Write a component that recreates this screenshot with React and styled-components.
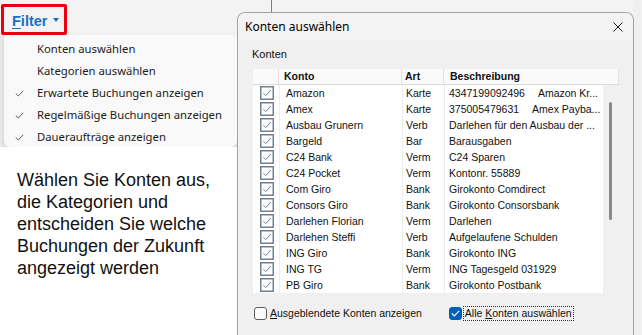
import React from "react";
import styled, { createGlobalStyle } from "styled-components";

const accounts = [
  ["Amazon", "Karte", "4347199092496", "Amazon Kr..."],
  ["Amex", "Karte", "375005479631", "Amex Payba..."],
  ["Ausbau Grunern", "Verb", "Darlehen für den Ausbau der ..."],
  ["Bargeld", "Bar", "Barausgaben"],
  ["C24 Bank", "Verm", "C24 Sparen"],
  ["C24 Pocket", "Verm", "Kontonr. 55889"],
  ["Com Giro", "Bank", "Girokonto Comdirect"],
  ["Consors Giro", "Bank", "Girokonto Consorsbank"],
  ["Darlehen Florian", "Verm", "Darlehen"],
  ["Darlehen Steffi", "Verb", "Aufgelaufene Schulden"],
  ["ING Giro", "Bank", "Girokonto ING"],
  ["ING TG", "Verm", "ING Tagesgeld 031929"],
  ["PB Giro", "Bank", "Girokonto Postbank"],
];

const menuItems = [
  { label: "Konten auswählen", checked: false },
  { label: "Kategorien auswählen", checked: false },
  { label: "Erwartete Buchungen anzeigen", checked: true },
  { label: "Regelmäßige Buchungen anzeigen", checked: true },
  { label: "Daueraufträge anzeigen", checked: true },
];

const MenuCheck = () => (
  <svg width="9" height="7" viewBox="0 0 9 7">
    <path d="M0.8 3.6 L3.3 6 L8.2 0.8" fill="none" stroke="#5c5c5c" strokeWidth="1" />
  </svg>
);

const RowCheck = () => (
  <svg width="14" height="14" viewBox="0 0 14 14">
    <rect x="0.75" y="0.75" width="12.5" height="12.5" fill="#fff" stroke="#6f7f96" strokeWidth="1.5" />
    <path d="M3.2 7 L5.8 9.6 L10.8 4" fill="none" stroke="#7b8696" strokeWidth="1" />
  </svg>
);

const CloseIcon = () => (
  <svg width="10" height="10" viewBox="0 0 10 10">
    <path d="M0.5 0.5 L9.5 9.5 M9.5 0.5 L0.5 9.5" stroke="#1a1a1a" strokeWidth="1" />
  </svg>
);

export default function App() {
  return (
    <>
      <GlobalStyle />
      <Screen>
        <LeftPane>
          <TopBar>
            <FilterButton>
              <FilterLabel>
                <u>F</u>ilter
              </FilterLabel>
              <Caret />
            </FilterButton>
          </TopBar>
          <MenuRow>
            <Menu>
              {menuItems.map((item) => (
                <MenuItem key={item.label}>
                  <CheckSlot>{item.checked && <MenuCheck />}</CheckSlot>
                  {item.label}
                </MenuItem>
              ))}
            </Menu>
          </MenuRow>
          <Hint>
            Wählen Sie Konten aus,
            <br />
            die Kategorien und
            <br />
            entscheiden Sie welche
            <br />
            Buchungen der Zukunft
            <br />
            angezeigt werden
          </Hint>
        </LeftPane>

        <DialogArea>
          <Dialog>
            <TitleBar>
              <Title>Konten auswählen</Title>
              <CloseIcon />
            </TitleBar>
            <DialogBody>
              <GroupLabel>Konten</GroupLabel>
              <Table>
                <HeaderRow>
                  <HeadCell width="26px" />
                  <HeadCell width="123px" pad="5px">Konto</HeadCell>
                  <HeadCell width="42px" pad="3px">Art</HeadCell>
                  <HeadCell grow pad="6px">Beschreibung</HeadCell>
                </HeaderRow>
                <TableBody>
                  <List>
                    {accounts.map(([name, kind, desc, note]) => (
                      <Row key={name}>
                        <CheckCell>
                          <RowCheck />
                        </CheckCell>
                        <Cell width="123px" pad="6px">{name}</Cell>
                        <Cell width="42px" pad="3px">{kind}</Cell>
                        <Cell grow pad="4px">
                          {desc}
                          {note && <Note>{note}</Note>}
                        </Cell>
                      </Row>
                    ))}
                  </List>
                  <ScrollLane>
                    <Thumb />
                  </ScrollLane>
                </TableBody>
              </Table>
              <Options>
                <Option>
                  <Box />
                  <OptionText>
                    <u>A</u>usgeblendete Konten anzeigen
                  </OptionText>
                </Option>
                <Option>
                  <Box checked>
                    <svg width="9" height="7" viewBox="0 0 9 7">
                      <path d="M0.8 3.4 L3.3 5.9 L8.2 0.8" fill="none" stroke="#fff" strokeWidth="1.2" />
                    </svg>
                  </Box>
                  <OptionText focused>
                    Alle <u>K</u>onten auswählen
                  </OptionText>
                </Option>
              </Options>
            </DialogBody>
          </Dialog>
        </DialogArea>
        <RightStrip />
      </Screen>
    </>
  );
}

const GlobalStyle = createGlobalStyle`
  html, body {
    margin: 0;
    padding: 0;
  }
  body {
    width: 642px;
    height: 335px;
    overflow: hidden;
    background: #f0f0f0;
    font-family: "Liberation Sans", Arial, sans-serif;
  }
`;

const Screen = styled.div`
  display: flex;
  width: 642px;
  height: 335px;
  overflow: hidden;
`;

const LeftPane = styled.div`
  width: 237px;
  flex: none;
  display: flex;
  flex-direction: column;
  background: #fff;
`;

const TopBar = styled.div`
  height: 35px;
  flex: none;
  box-sizing: border-box;
  padding: 4px 0 0 1px;
  background: #f3f3f3;
  display: flex;
  align-items: flex-start;
`;

const FilterButton = styled.div`
  width: 66px;
  height: 31px;
  box-sizing: border-box;
  border: 3px solid #e8000b;
  border-radius: 2px;
  padding: 2px 0 0 8px;
  display: flex;
  align-items: center;
  gap: 6px;
`;

const FilterLabel = styled.span`
  font: 700 14.5px "Liberation Sans", Arial, sans-serif;
  color: #1c6fc8;
  u {
    text-underline-offset: 2px;
  }
`;

const Caret = styled.span`
  width: 0;
  height: 0;
  border-left: 3px solid transparent;
  border-right: 3px solid transparent;
  border-top: 4px solid #1c6fc8;
  margin-top: -1px;
`;

const MenuRow = styled.div`
  display: flex;
  background: #e9e9e9;
`;

const Menu = styled.div`
  flex: 1;
  margin-left: 4px;
  padding: 2px 0 0;
  background: #f9f9f9;
  border-radius: 0 0 6px 6px;
  box-shadow: 0 2px 4px rgba(0, 0, 0, 0.12);
`;

const MenuItem = styled.div`
  height: 22px;
  display: flex;
  align-items: center;
  font: 11.3px "Noto Sans", "Open Sans", sans-serif;
  color: #1b1b1b;
  white-space: nowrap;
`;

const CheckSlot = styled.span`
  width: 33px;
  flex: none;
  display: flex;
  padding-left: 11px;
  padding-top: 2px;
  box-sizing: border-box;
`;

const Hint = styled.div`
  flex: 1;
  padding: 22px 0 0 17px;
  font-size: 18px;
  line-height: 22px;
  color: #111;
  background: #fff;
`;

const DialogArea = styled.div`
  width: 397px;
  flex: none;
  padding-top: 12px;
  box-sizing: border-box;
  background: linear-gradient(#7d7d7d, #7d7d7d) 34px 0 / 1px 12px no-repeat,
    #f3f3f3;
`;

const Dialog = styled.div`
  height: 100%;
  box-sizing: border-box;
  border: 1px solid #a3a3a3;
  border-bottom: none;
  border-radius: 8px 8px 0 0;
  background: #f0f0f0;
  display: flex;
  flex-direction: column;
  overflow: hidden;
`;

const TitleBar = styled.div`
  height: 27px;
  flex: none;
  display: flex;
  align-items: center;
  justify-content: space-between;
  padding: 0 10px 0 7px;
  background: #f3f3f3;
`;

const Title = styled.span`
  font: 12px "Noto Sans", "Open Sans", sans-serif;
  color: #000;
`;

const DialogBody = styled.div`
  flex: 1;
  padding: 7px 0 0 15px;
`;

const GroupLabel = styled.div`
  height: 14px;
  line-height: 14px;
  margin-left: -1px;
  font-size: 11px;
  color: #111;
`;

const Table = styled.div`
  width: 366px;
  margin-top: 8px;
  font-size: 10.5px;
  color: #111;
`;

const HeaderRow = styled.div`
  display: flex;
  height: 15px;
  background: #fafafa;
  border-bottom: 1px solid #dcdcdc;
`;

const HeadCell = styled.div`
  box-sizing: border-box;
  width: ${({ width }) => width || "auto"};
  flex: ${({ grow }) => (grow ? "1" : "none")};
  padding-left: ${({ pad }) => pad || "0"};
  border-right: 1px solid #e1e1e1;
  font-weight: 700;
  line-height: 15px;
  white-space: nowrap;
`;

const TableBody = styled.div`
  display: flex;
`;

const List = styled.div`
  width: 350px;
  background: #fff;
`;

const Row = styled.div`
  display: flex;
  height: 16px;
  align-items: center;
`;

const CheckCell = styled.div`
  width: 26px;
  height: 16px;
  flex: none;
  box-sizing: border-box;
  padding: 1px 0 0 7px;
`;

const Cell = styled.div`
  box-sizing: border-box;
  width: ${({ width }) => width || "auto"};
  flex: ${({ grow }) => (grow ? "1" : "none")};
  min-width: 0;
  height: 16px;
  line-height: 16px;
  padding-left: ${({ pad }) => pad || "0"};
  border-left: 1px solid #eeeeee;
  white-space: nowrap;
  overflow: hidden;
`;

const Note = styled.span`
  margin-left: 13px;
`;

const ScrollLane = styled.div`
  width: 16px;
  padding: 17px 0 0 6px;
  box-sizing: border-box;
`;

const Thumb = styled.div`
  width: 3px;
  height: 118px;
  border-radius: 2px;
  background: #8a8a8a;
`;

const Options = styled.div`
  display: flex;
  margin-top: 13px;
  padding-left: 1px;
  gap: 25px;
`;

const Option = styled.label`
  display: flex;
  align-items: center;
  gap: 1px;
  font-size: 10.5px;
  color: #111;
`;

const Box = styled.span`
  width: 13px;
  height: 13px;
  box-sizing: border-box;
  border-radius: 3px;
  border: 1px solid ${({ checked }) => (checked ? "#005fb8" : "#5d5d5d")};
  background: ${({ checked }) => (checked ? "#005fb8" : "#fbfbfb")};
  display: flex;
  align-items: center;
  justify-content: center;
`;

const OptionText = styled.span`
  padding: 0 1px;
  line-height: 13px;
  border: 1px dotted ${({ focused }) => (focused ? "#333" : "transparent")};
  u {
    text-underline-offset: 1px;
  }
`;

const RightStrip = styled.div`
  flex: 1;
  background: #f0f0f0;
`;
